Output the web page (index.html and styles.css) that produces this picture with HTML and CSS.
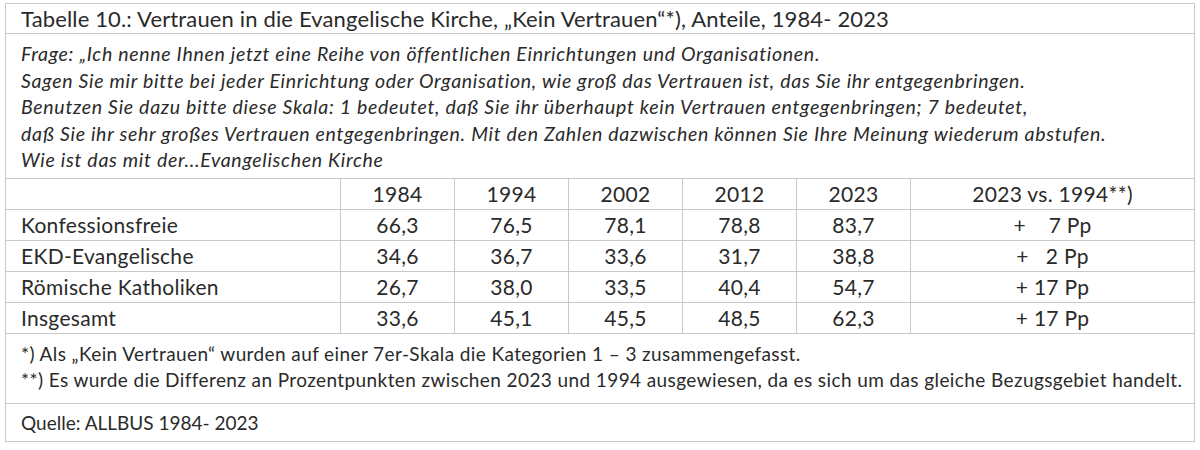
FILE: index.html
```html
<!DOCTYPE html>
<html lang="de">
<head>
<meta charset="utf-8">
<link rel="stylesheet" href="styles.css">
</head>
<body>
<table class="tbl">
  <colgroup>
    <col class="c-label">
    <col class="c-num"><col class="c-num"><col class="c-num"><col class="c-num"><col class="c-num">
    <col class="c-diff">
  </colgroup>
  <tr class="r-title"><td colspan="7">Tabelle 10.: Vertrauen in die Evangelische Kirche, „Kein Vertrauen“*), Anteile, 1984- 2023</td></tr>
  <tr class="r-question"><td colspan="7">Frage: „Ich nenne Ihnen jetzt eine Reihe von öffentlichen Einrichtungen und Organisationen.<br>Sagen Sie mir bitte bei jeder Einrichtung oder Organisation, wie groß das Vertrauen ist, das Sie ihr entgegenbringen.<br>Benutzen Sie dazu bitte diese Skala: 1 bedeutet, daß Sie ihr überhaupt kein Vertrauen entgegenbringen; 7 bedeutet,<br>daß Sie ihr sehr großes Vertrauen entgegenbringen. Mit den Zahlen dazwischen können Sie Ihre Meinung wiederum abstufen.<br>Wie ist das mit der...Evangelischen Kirche</td></tr>
  <tr class="r-data"><td></td><td>1984</td><td>1994</td><td>2002</td><td>2012</td><td>2023</td><td>2023 vs. 1994**)</td></tr>
  <tr class="r-data"><td>Konfessionsfreie</td><td>66,3</td><td>76,5</td><td>78,1</td><td>78,8</td><td>83,7</td><td>+&nbsp;&nbsp;&nbsp; 7 Pp</td></tr>
  <tr class="r-data"><td>EKD-Evangelische</td><td>34,6</td><td>36,7</td><td>33,6</td><td>31,7</td><td>38,8</td><td>+&nbsp;&nbsp; 2 Pp</td></tr>
  <tr class="r-data"><td>Römische Katholiken</td><td>26,7</td><td>38,0</td><td>33,5</td><td>40,4</td><td>54,7</td><td>+ 17 Pp</td></tr>
  <tr class="r-data"><td>Insgesamt</td><td>33,6</td><td>45,1</td><td>45,5</td><td>48,5</td><td>62,3</td><td>+ 17 Pp</td></tr>
  <tr class="r-notes"><td colspan="7">*) Als „Kein Vertrauen“ wurden auf einer 7er-Skala die Kategorien 1 – 3 zusammengefasst.<br>**) Es wurde die Differenz an Prozentpunkten zwischen 2023 und 1994 ausgewiesen, da es sich um das gleiche Bezugsgebiet handelt.</td></tr>
  <tr class="r-source"><td colspan="7">Quelle: ALLBUS 1984- 2023</td></tr>
</table>
</body>
</html>
```

FILE: styles.css
```css
html, body {
  margin: 0;
  padding: 0;
  background: #ffffff;
}
body {
  padding: 3px 0 0 5px;
  font-family: Lato, "Open Sans", sans-serif;
  color: #2a2a2a;
}
.tbl {
  border-collapse: collapse;
  width: 1189px;
  table-layout: fixed;
}
.tbl td {
  border: 1px solid #c9c9c9;
  padding: 0;
  white-space: nowrap;
}
.c-label { width: 335px; }
.c-num { width: 114px; }
.c-diff { width: 284px; }

.r-title td {
  height: 29px;
  font-size: 22px;
  letter-spacing: 0.15px;
  padding-left: 15px;
  line-height: 29px;
}
.r-question td {
  height: 145px;
  font-size: 19.5px;
  letter-spacing: 0.7px;
  font-style: italic;
  line-height: 26.5px;
  padding-left: 15px;
  box-sizing: border-box;
  padding-top: 7px;
  vertical-align: top;
}
.r-data td {
  height: 30px;
  font-size: 21px;
  letter-spacing: 0.3px;
  line-height: 30px;
  text-align: center;
}
.r-data td:first-child {
  text-align: left;
  padding-left: 15px;
}
.r-notes td {
  height: 70px;
  font-size: 19px;
  letter-spacing: 0.4px;
  line-height: 26px;
  padding-left: 15px;
  vertical-align: top;
  padding-top: 7px;
  box-sizing: border-box;
}
.r-source td {
  height: 37px;
  font-size: 19px;
  letter-spacing: 0;
  line-height: 37px;
  padding-left: 15px;
}
```
